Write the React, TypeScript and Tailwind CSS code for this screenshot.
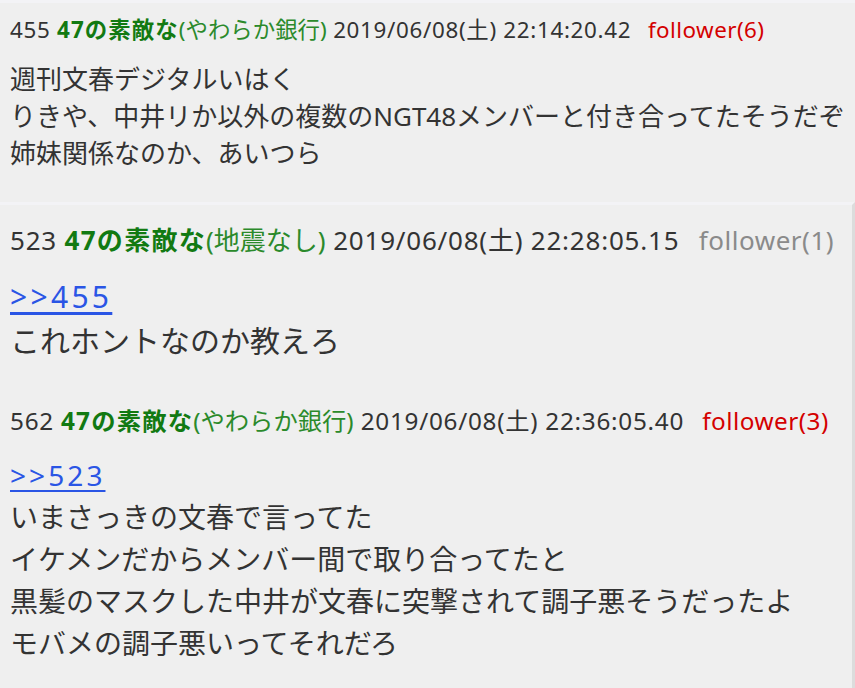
const font = { fontFamily: '"Noto Sans", "Noto Sans CJK JP", sans-serif' };

type Post = {
  no: string;
  id: string;
  date: string;
  follower: string;
  hot: boolean;
  anchor?: string;
  lines: string[];
};

const first: Post = {
  no: "455",
  id: "(やわらか銀行)",
  date: "2019/06/08(土) 22:14:20.42",
  follower: "follower(6)",
  hot: true,
  lines: [
    "週刊文春デジタルいはく",
    "りきや、中井リか以外の複数のNGT48メンバーと付き合ってたそうだぞ",
    "姉妹関係なのか、あいつら",
  ],
};

const mid: Post = {
  no: "523",
  id: "(地震なし)",
  date: "2019/06/08(土) 22:28:05.15",
  follower: "follower(1)",
  hot: false,
  anchor: ">>455",
  lines: ["これホントなのか教えろ"],
};

const last: Post = {
  no: "562",
  id: "(やわらか銀行)",
  date: "2019/06/08(土) 22:36:05.40",
  follower: "follower(3)",
  hot: true,
  anchor: ">>523",
  lines: [
    "いまさっきの文春で言ってた",
    "イケメンだからメンバー間で取り合ってたと",
    "黒髪のマスクした中井が文春に突撃されて調子悪そうだったよ",
    "モバメの調子悪いってそれだろ",
  ],
};

function Header({ post, size }: { post: Post; size: string }) {
  return (
    <div className={size + " text-[#333] whitespace-nowrap"}>
      <span className="tracking-[0.03em]">{post.no} </span>
      <span className="font-bold tracking-[0.05em] text-[#127a12]">47の素敵な</span>
      <span className="text-[#2b8a2b]">{post.id}</span>
      <span className="tracking-[0.03em]"> {post.date}</span>
      <span
        className={
          post.hot
            ? "ml-[0.75em] tracking-[0.02em] text-[#d40000]"
            : "ml-[0.75em] tracking-[0.02em] text-[#8a8a8a]"
        }
      >
        {post.follower}
      </span>
    </div>
  );
}

function Body({ post, size }: { post: Post; size: string }) {
  return (
    <div className={size + " text-[#333] whitespace-nowrap"}>
      {post.anchor && (
        <a
          href="#"
          className="tracking-[0.11em] text-[#2a55e5] underline underline-offset-[4px]"
        >
          {post.anchor}
        </a>
      )}
      {post.lines.map((l) => (
        <p key={l}>{l}</p>
      ))}
    </div>
  );
}

export default function App() {
  return (
    <main className="w-[855px] h-[688px] overflow-hidden bg-[#efefef]" style={font}>
      {/* top post */}
      <section className="border-t-[3px] border-[#f3f3f6] pl-[10px] pt-[12px] h-[202px]">
        <Header post={first} size="text-[22.4px] leading-[30px]" />
        <div className="mt-[16px]">
          <Body post={first} size="text-[26px] leading-[37px]" />
        </div>
      </section>

      {/* replies */}
      <section className="border-t-[3px] border-[#f3f3f6] border-r-[3px] border-r-[#dcdcdc] pl-[10px] pt-[19px] h-[486px]">
        <Header post={mid} size="text-[26px] leading-[32px]" />
        <div className="mt-[19px]">
          <Body post={mid} size="text-[30px] leading-[44px]" />
        </div>

        <div className="mt-[42px]">
          <Header post={last} size="text-[24.3px] leading-[32px]" />
        </div>
        <div className="mt-[17px]">
          <Body post={last} size="text-[28px] leading-[42px]" />
        </div>
      </section>
    </main>
  );
}
